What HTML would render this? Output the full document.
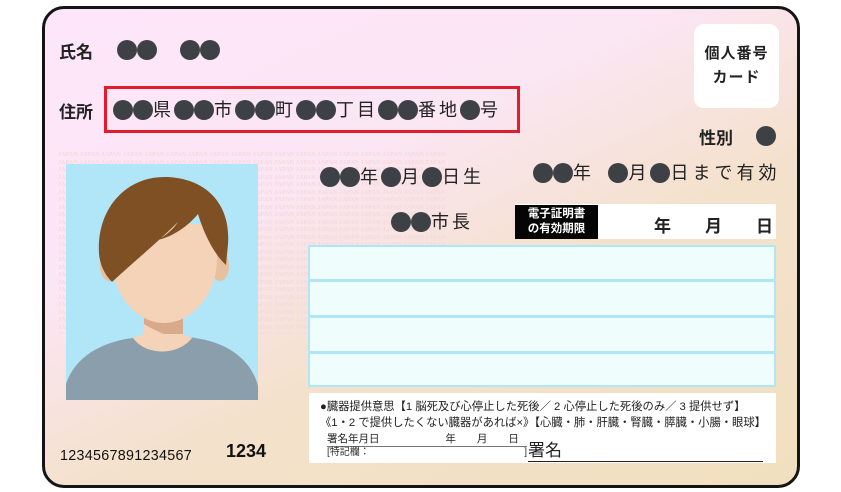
<!DOCTYPE html>
<html><head><meta charset="utf-8"><style>
*{margin:0;padding:0;box-sizing:border-box}
body{width:841px;height:492px;background:#fff;position:relative;overflow:hidden;font-family:"Liberation Sans","Noto Sans CJK JP",sans-serif;color:#222}
.card{position:absolute;left:42px;top:6px;width:758px;height:482px;border:3px solid #151515;border-radius:22px;background:linear-gradient(155deg,#fde6fa 0%,#fbe6f4 35%,#f4e1cc 60%,#f1e0bf 100%);overflow:hidden}
.a{position:absolute;white-space:nowrap}
.d{display:inline-block;width:20px;height:20px;border-radius:50%;background:#3d4146;vertical-align:middle}
.t{vertical-align:middle;font-size:18px;color:#222;letter-spacing:3px}
.pat{position:absolute;left:58px;top:152px;width:442px;height:182px;overflow:hidden;font:bold 6px/7.5px "Liberation Serif",serif;color:#f4d9dc;letter-spacing:.15px}
.b{font-weight:bold}
</style></head><body>
<div class="card"></div>
<div class="pat">
JAPAN JAPAN JAPAN JAPAN JAPAN JAPAN JAPAN JAPAN JAPAN JAPAN JAPAN JAPAN JAPAN JAPAN JAPAN JAPAN JAPAN JAPAN<br>
JAPAN JAPAN JAPAN JAPAN JAPAN JAPAN JAPAN JAPAN JAPAN JAPAN JAPAN JAPAN JAPAN JAPAN JAPAN JAPAN JAPAN JAPAN<br>
JAPAN JAPAN JAPAN JAPAN JAPAN JAPAN JAPAN JAPAN JAPAN JAPAN JAPAN JAPAN JAPAN JAPAN JAPAN JAPAN JAPAN JAPAN<br>
JAPAN JAPAN JAPAN JAPAN JAPAN JAPAN JAPAN JAPAN JAPAN JAPAN JAPAN JAPAN JAPAN JAPAN JAPAN JAPAN JAPAN JAPAN<br>
JAPAN JAPAN JAPAN JAPAN JAPAN JAPAN JAPAN JAPAN JAPAN JAPAN JAPAN JAPAN JAPAN JAPAN JAPAN JAPAN JAPAN JAPAN<br>
JAPAN JAPAN JAPAN JAPAN JAPAN JAPAN JAPAN JAPAN JAPAN JAPAN JAPAN JAPAN JAPAN JAPAN JAPAN JAPAN JAPAN JAPAN<br>
JAPAN JAPAN JAPAN JAPAN JAPAN JAPAN JAPAN JAPAN JAPAN JAPAN JAPAN JAPAN JAPAN JAPAN JAPAN JAPAN JAPAN JAPAN<br>
JAPAN JAPAN JAPAN JAPAN JAPAN JAPAN JAPAN JAPAN JAPAN JAPAN JAPAN JAPAN JAPAN JAPAN JAPAN JAPAN JAPAN JAPAN<br>
JAPAN JAPAN JAPAN JAPAN JAPAN JAPAN JAPAN JAPAN JAPAN JAPAN JAPAN JAPAN JAPAN JAPAN JAPAN JAPAN JAPAN JAPAN<br>
JAPAN JAPAN JAPAN JAPAN JAPAN JAPAN JAPAN JAPAN JAPAN JAPAN JAPAN JAPAN JAPAN JAPAN JAPAN JAPAN JAPAN JAPAN<br>
JAPAN JAPAN JAPAN JAPAN JAPAN JAPAN JAPAN JAPAN JAPAN JAPAN JAPAN JAPAN JAPAN JAPAN JAPAN JAPAN JAPAN JAPAN<br>
JAPAN JAPAN JAPAN JAPAN JAPAN JAPAN JAPAN JAPAN JAPAN JAPAN JAPAN JAPAN JAPAN JAPAN JAPAN JAPAN JAPAN JAPAN<br>
JAPAN JAPAN JAPAN JAPAN JAPAN JAPAN JAPAN JAPAN JAPAN JAPAN JAPAN JAPAN JAPAN JAPAN JAPAN JAPAN JAPAN JAPAN<br>
JAPAN JAPAN JAPAN JAPAN JAPAN JAPAN JAPAN JAPAN JAPAN JAPAN JAPAN JAPAN JAPAN JAPAN JAPAN JAPAN JAPAN JAPAN<br>
JAPAN JAPAN JAPAN JAPAN JAPAN JAPAN JAPAN JAPAN JAPAN JAPAN JAPAN JAPAN JAPAN JAPAN JAPAN JAPAN JAPAN JAPAN<br>
JAPAN JAPAN JAPAN JAPAN JAPAN JAPAN JAPAN JAPAN JAPAN JAPAN JAPAN JAPAN JAPAN JAPAN JAPAN JAPAN JAPAN JAPAN<br>
JAPAN JAPAN JAPAN JAPAN JAPAN JAPAN JAPAN JAPAN JAPAN JAPAN JAPAN JAPAN JAPAN JAPAN JAPAN JAPAN JAPAN JAPAN<br>
JAPAN JAPAN JAPAN JAPAN JAPAN JAPAN JAPAN JAPAN JAPAN JAPAN JAPAN JAPAN JAPAN JAPAN JAPAN JAPAN JAPAN JAPAN<br>
JAPAN JAPAN JAPAN JAPAN JAPAN JAPAN JAPAN JAPAN JAPAN JAPAN JAPAN JAPAN JAPAN JAPAN JAPAN JAPAN JAPAN JAPAN<br>
JAPAN JAPAN JAPAN JAPAN JAPAN JAPAN JAPAN JAPAN JAPAN JAPAN JAPAN JAPAN JAPAN JAPAN JAPAN JAPAN JAPAN JAPAN<br>
JAPAN JAPAN JAPAN JAPAN JAPAN JAPAN JAPAN JAPAN JAPAN JAPAN JAPAN JAPAN JAPAN JAPAN JAPAN JAPAN JAPAN JAPAN<br>
JAPAN JAPAN JAPAN JAPAN JAPAN JAPAN JAPAN JAPAN JAPAN JAPAN JAPAN JAPAN JAPAN JAPAN JAPAN JAPAN JAPAN JAPAN<br>
JAPAN JAPAN JAPAN JAPAN JAPAN JAPAN JAPAN JAPAN JAPAN JAPAN JAPAN JAPAN JAPAN JAPAN JAPAN JAPAN JAPAN JAPAN<br>
JAPAN JAPAN JAPAN JAPAN JAPAN JAPAN JAPAN JAPAN JAPAN JAPAN JAPAN JAPAN JAPAN JAPAN JAPAN JAPAN JAPAN JAPAN<br>
JAPAN JAPAN JAPAN JAPAN JAPAN JAPAN JAPAN JAPAN JAPAN JAPAN JAPAN JAPAN JAPAN JAPAN JAPAN JAPAN JAPAN JAPAN
</div>

<!-- name -->
<div class="a b" style="left:59px;top:38px;font-size:17px">氏名</div>
<div class="a" style="left:117px;top:40px"><span class="d"></span><span class="d"></span></div>
<div class="a" style="left:180px;top:40px"><span class="d"></span><span class="d"></span></div>

<!-- address -->
<div class="a b" style="left:59px;top:98px;font-size:17px">住所</div>
<div class="a" style="left:104px;top:86px;width:416px;height:47px;border:3px solid #e21c2a"></div>
<div class="a" style="left:113px;top:99px;height:22px;line-height:22px"><span class="d"></span><span class="d"></span><span class="t">県</span><span class="d"></span><span class="d"></span><span class="t">市</span><span class="d"></span><span class="d"></span><span class="t">町</span><span class="d"></span><span class="d"></span><span class="t">丁目</span><span class="d"></span><span class="d"></span><span class="t">番地</span><span class="d"></span><span class="t">号</span></div>

<!-- top right -->
<div class="a b" style="left:694px;top:24px;width:85px;height:84px;background:#fff;border-radius:10px;text-align:center;font-size:15px;line-height:24px;padding-top:18px;letter-spacing:1px">個人番号<br>カード</div>
<div class="a b" style="left:699px;top:124px;font-size:17px">性別</div>
<div class="a" style="left:756px;top:126px"><span class="d"></span></div>

<!-- birth -->
<div class="a" style="left:320px;top:166px;line-height:22px"><span class="d"></span><span class="d"></span><span class="t">年</span><span class="d"></span><span class="t">月</span><span class="d"></span><span class="t">日生</span></div>
<div class="a" style="left:391px;top:211px;line-height:22px"><span class="d"></span><span class="d"></span><span class="t">市長</span></div>
<div class="a" style="left:533px;top:162px;line-height:22px"><span class="d"></span><span class="d"></span><span class="t" style="letter-spacing:4px">年 </span>&nbsp;<span class="d"></span><span class="t" style="letter-spacing:4px">月</span><span class="d"></span><span class="t" style="letter-spacing:4px">日まで有効</span></div>

<!-- expiry box -->
<div class="a" style="left:515px;top:204px;width:261px;height:35px;background:#fff"></div>
<div class="a b" style="left:515px;top:205px;width:83px;height:34px;background:#050505;color:#fff;font-size:11.5px;line-height:15px;text-align:center;padding-top:2px">電子証明書<br>の有効期限</div>
<div class="a b" style="left:654px;top:212px;font-size:17px">年</div>
<div class="a b" style="left:705px;top:212px;font-size:17px">月</div>
<div class="a b" style="left:756px;top:212px;font-size:17px">日</div>

<!-- table -->
<div class="a" style="left:308px;top:245px;width:468px;height:142px;background:#b0e7f8;padding:2px">
<div style="height:32px;background:#effdfd;margin-bottom:3px"></div>
<div style="height:33px;background:#effdfd;margin-bottom:3px"></div>
<div style="height:33px;background:#effdfd;margin-bottom:3px"></div>
<div style="height:31px;background:#effdfd"></div>
</div>

<!-- organ donation -->
<div class="a" style="left:309px;top:393px;width:467px;height:70px;background:#fff"></div>
<div class="a" style="left:320px;top:399px;font-size:11.3px;line-height:16px;color:#222">●臓器提供意思【1 脳死及び心停止した死後／ 2 心停止した死後のみ／ 3 提供せず】<br>《1・2 で提供したくない臓器があれば×》【心臓・肺・肝臓・腎臓・膵臓・小腸・眼球】</div>
<div class="a" style="left:327px;top:433px;font-size:10.5px;line-height:12px">署名年月日　　　　　　 年　　月　　日</div>
<div class="a" style="left:327px;top:446px;width:200px;border-top:1px solid #777;font-size:10px;line-height:12px;color:#333">[特記欄：<span style="position:absolute;right:0;top:0">]</span></div>
<div class="a" style="left:528px;top:441px;font-size:17px;line-height:20px">署名</div>
<div class="a" style="left:528px;top:461px;width:235px;border-top:1px solid #222"></div>

<!-- photo -->
<svg class="a" style="left:66px;top:164px" width="192" height="236" viewBox="0 0 192 236">
<rect width="192" height="236" fill="#b0e6f7"/>
<path d="M0 236 L0 220 C10 190 40 176 75 173 L120 173 C160 176 185 195 192 222 L192 236 Z" fill="#8a9fab"/>
<path d="M78 145 L117 145 L117 180 L78 180 Z" fill="#f4d3b8"/>
<path d="M78 148 L117 148 L117 176 C100 172 88 166 78 160 Z" fill="#d8a98a"/>
<path d="M67 174 C80 192 112 192 126 174 L117 170 L78 170 Z" fill="#f4d3b8"/>
<ellipse cx="43" cy="102" rx="9" ry="15" fill="#e8bf9f"/>
<ellipse cx="154" cy="102" rx="9" ry="15" fill="#e8bf9f"/>
<path d="M46 60 L151 60 L151 95 C151 130 126 159 98 159 C70 159 46 130 46 95 Z" fill="#f4d3b8"/>
<path d="M33 90 C30 45 60 12 100 13 C140 14 165 40 162 80 L160 101 C148 90 138 70 132 50 C122 62 108 72 92 76 C102 70 108 64 112 58 C90 80 65 100 46 118 C38 110 34 100 33 90 Z" fill="#7e5024"/>
</svg>

<!-- numbers -->
<div class="a" style="left:60px;top:448px;font-size:14.3px;letter-spacing:.3px;color:#111">1234567891234567</div>
<div class="a b" style="left:226px;top:441px;font-size:18px;color:#111">1234</div>
</body></html>
